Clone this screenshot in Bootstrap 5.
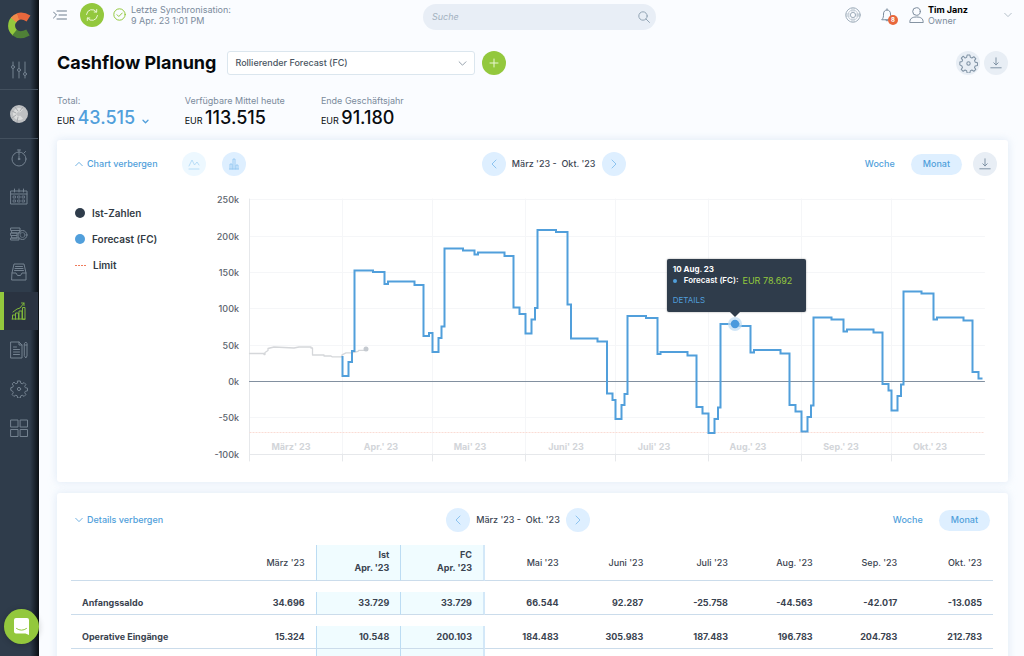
<!DOCTYPE html>
<html lang="de">
<head>
<meta charset="utf-8">
<meta name="viewport" content="width=device-width, initial-scale=1">
<title>Cashflow Planung</title>
<link href="https://cdn.jsdelivr.net/npm/bootstrap@5.3.0/dist/css/bootstrap.min.css" rel="stylesheet">
<script src="https://cdn.jsdelivr.net/npm/bootstrap@5.3.0/dist/js/bootstrap.bundle.min.js"></script>
<style>
:root{--navy:#2f3c4b;--blue:#519fdb;--sky:#deefff;--green:#93c83d;--slate:#7b8b9c;--mist:#e8eef5;--line:#cbdceb}
body{font-family:Inter,Roboto,sans-serif;font-size:9px;line-height:12px;color:#3c4653;background:#fafcff}
svg{display:block;fill:none;stroke-linejoin:round}
svg:not([stroke]){stroke:currentColor}
svg:not([stroke-linecap]){stroke-linecap:round}
.side{width:39px;padding-right:1px;background:linear-gradient(90deg,var(--navy) 0 30px,#1e2833 34px,#0a0e12 39px);color:#748290}
.side a{color:inherit}
.side-logo{height:50px}
.side-tune{height:39px}
.side-user{height:50px;border-top:1px solid #43505e;border-bottom:1px solid #43505e}
.side-nav{height:308px}
.side-nav a.on{color:#7fb63a;background:#2a3341;box-shadow:inset 4px 0 var(--green)}
.chat{left:4px;bottom:12px;width:35px;height:35px;background:var(--green);box-shadow:0 1px 6px #0003}
.top{display:grid;grid-template-columns:minmax(0,370px) minmax(0,233px) 1fr;height:32px;padding:0 12px 0 14px}
.top-l{height:29px}
.round{width:24px;height:24px;border:0;border-radius:50%;padding:0;display:flex;align-items:center;justify-content:center;flex:none}
.r-green{background:var(--green);color:#eaf6d4}
.r-sky{background:var(--sky);color:#8dc4f0}
.r-pale{background:#edf8ff;color:#a9d5f5}
.r-mist{background:var(--mist);color:#8093a5}
.muted{color:var(--slate)}
.two-line{line-height:11px}
.sync{margin:0 9px 0 13px}
.sync-text{margin-left:5px}
.search{height:26px;margin-top:4px;border-radius:13px;background:#e8eef6;padding:0 6px 0 7px}
.search input{background:none;border:0;outline:0;font-size:9px;font-style:italic;color:var(--slate)}
.search input::placeholder{color:#a3b1c0}
.plain{border:0;background:none;padding:0;color:inherit}
.menu-btn{color:#6d7d8d}
.account-btn{margin-left:36px}
.alert-dot{width:10px;height:10px;right:-5px;bottom:-3px;background:#e8673c;color:#fff;font-size:6px;line-height:10px}
.content{padding:0 16px 0 18px}
h1{font-size:18px;line-height:24px;font-weight:700;color:#06090c}
.title-row{padding-top:19px}
.pick{width:248px;height:24px;margin:0 7px 0 11px;padding:0 24px 0 7px;font-size:9px;font-weight:500;color:#4a5562;border:1px solid #dbe6ee;border-radius:3px;background-size:9px 9px;background-position:right 7px center;background-image:url("data:image/svg+xml,%3Csvg xmlns='http://www.w3.org/2000/svg' viewBox='0 0 9 9' fill='none' stroke='%2395a0ab'%3E%3Cpath d='M.8 2.5 4.5 6.2 8.2 2.5'/%3E%3C/svg%3E")}
.kpis{padding-top:20px;padding-bottom:13px;gap:36px}
.kpis strong{font-size:18px;font-weight:500}
.kpis .val{line-height:22px;height:20px;color:#090c10}
.kpis .val .sum{color:var(--blue)}
.panel{background:#fff;border-radius:3px;box-shadow:0 0 8px #c9dcec99}
.chart-panel{padding:12px 11px 10px 18px}
.detail-panel{margin-top:11px;padding:15px 15px 0 14px}
.bar{display:grid;align-items:center}
.chart-panel .bar{grid-template-columns:23fr auto 21fr}
.detail-panel .bar{grid-template-columns:15fr auto 16fr;padding-right:3px}
.range{gap:6px}
.blue{color:var(--blue);font-weight:500;text-decoration:none}
.pill{border:0;border-radius:11px;height:21px;padding:0 12px;background:var(--sky);color:var(--blue);font-weight:500}
.views{gap:16px}
.views .round{margin-left:-5px}
.span-txt{font-weight:500;white-space:pre}
.legend{width:132px;padding-top:31px;font-size:10px;font-weight:600;color:#333b44}
.legend li{height:26px;gap:7px}
.dot{width:10px;height:10px;margin-top:1px;border-radius:50%}
.dot-ist{background:var(--navy)}
.dot-fc{background:var(--blue)}
.limit{width:11px;height:1px;margin-top:6px;background:repeating-linear-gradient(90deg,#ef7c5d 0 2px,transparent 2px 3px)}
.chart{padding-right:5px;padding-top:14px}
.chart svg{width:100%;height:auto}
.chart text{stroke:none;font-size:9px}
.ylab{fill:#5c646d;text-anchor:end;font-weight:500}
.xlab{fill:#d2d5d9;text-anchor:middle;font-weight:700}
.tip{left:58.2%;top:28.2%;width:139px;height:53px;background:var(--navy);border-radius:2px;color:#fff;padding:5px 6px;line-height:11px;font-size:8px;box-shadow:0 0 2px #0006}
.tip::after{content:"";position:absolute;left:63px;top:53px;border:5px solid transparent;border-top-color:var(--navy);border-bottom:0}
.tip .dot{width:4px;height:4px;margin:0 7px 0 0;background:var(--blue)}
.tip .amount{font-size:9px;color:var(--green)}
.tip a{margin-top:9px}
.grid-tbl{width:100%;table-layout:fixed;border-collapse:separate;border-spacing:0;margin-top:13px;color:#3a4350}
.grid-tbl th,.grid-tbl td{text-align:right;padding:0 11px 0 0;border-bottom:1px solid var(--line);height:23px;font-weight:700}
.grid-tbl th:first-child{width:160px;text-align:left;padding-left:11px}
.grid-tbl thead th{height:36px;font-weight:500}
.grid-tbl thead th.now{font-weight:700;line-height:13px;padding-bottom:4px}
.grid-tbl .now{background:#f0fcff;border-left:1px solid #bcdcf3}
.grid-tbl .now+.now{border-right:2px solid #d3e8f8}
.grid-tbl .gap td{height:11px;border:0;padding:0}
</style>
</head>
<body class="d-flex vh-100 overflow-hidden">
<aside class="side vh-100 flex-shrink-0 d-flex flex-column">
  <a href="#" aria-label="Startseite" class="side-logo d-flex justify-content-center align-items-center">
    <svg width="24" height="28" viewBox="0 0 24 28" stroke-width="7" stroke-linecap="butt"><path stroke="#93c83d" d="M7.500 8C3.500 12 3.500 18 8 22"/><path stroke="#4f8037" d="M7.500 21.500Q13 26 21 21.500"/><path stroke="#f08a4b" d="M6.500 9Q8.500 6.500 11.500 5.500"/><path stroke="#e8673c" d="M11 5.500Q16 4 21.500 7.500"/></svg>
  </a>
  <a href="#" aria-label="Einstellungen" class="side-tune d-flex justify-content-center align-items-center">
    <svg width="16" height="18" viewBox="0 0 16 18"><path d="M2 1v3M2 8v9M8 1v6M8 11v6M14 1v10M14 15v2"/><circle cx="2" cy="6" r="1.500"/><circle cx="8" cy="9" r="1.500"/><circle cx="14" cy="13" r="1.500"/></svg>
  </a>
  <a href="#" aria-label="Profil" class="side-user d-flex justify-content-center align-items-center">
    <svg width="20" height="20" viewBox="0 0 20 20" stroke="none"><circle cx="10" cy="10" r="9" fill="#bfc1c3"/><path d="M14 5.500a6 6 0 1 0 0 9l-3-3a2 2 0 1 1 0-3z" fill="#dcdddd"/><path d="m3 7 4 2M6 3l3 4M3 14l4-3M8 18l1-5M14 3l-3 4" stroke="#a5a8ab"/></svg>
  </a>
  <nav class="side-nav nav d-flex flex-column flex-nowrap">
    <a href="#" aria-label="Zeit" class="flex-fill d-flex justify-content-center align-items-center"><svg width="18" height="18" viewBox="0 0 18 18"><circle cx="9" cy="10" r="7"/><path d="M9 1v5M7.500 1h3M9 7v3.500M14 4l1.500-1.500"/><circle cx="9" cy="10" r=".8"/></svg></a>
    <a href="#" aria-label="Kalender" class="flex-fill d-flex justify-content-center align-items-center"><svg width="18" height="17" viewBox="0 0 18 17"><path d="M1 3h16v13H1zM1 6h16M4.500 1v3M9 1v3M13.500 1v3"/><path d="M3.500 8h2v2h-2zM8 8h2v2H8zM12.500 8h2v2h-2zM3.500 12h2v2h-2zM8 12h2v2H8zM12.500 12h2v2h-2z" stroke-width=".8"/></svg></a>
    <a href="#" aria-label="Konten" class="flex-fill d-flex justify-content-center align-items-center"><svg width="18" height="16" viewBox="0 0 18 16"><path d="M1 2h9v2.500H1zM2 4.500h8v2.500H2zM1 7h6v2.500H1zM2 9.500h5V12H2zM1 12h8v2H1z"/><circle cx="12.500" cy="9" r="4.500"/><circle cx="12.500" cy="9" r="2.500" stroke-width=".7"/></svg></a>
    <a href="#" aria-label="Belege" class="flex-fill d-flex justify-content-center align-items-center"><svg width="16" height="18" viewBox="0 0 16 18"><path d="M1 10 3 1h10l2 9v7H1zM1 10h4l1.500 2.500h3L11 10h4M4.500 3.500h7M4 5.500h8M3.500 7.500h9"/></svg></a>
    <a href="#" aria-label="Planung" aria-current="page" class="on flex-fill d-flex justify-content-center align-items-center"><svg width="16" height="18" viewBox="0 0 16 18"><path d="M1.500 17v-4h3v4M4.500 17v-6h3v6M8 17V9h3v8M11.500 17V5.500h2.500V17zM1 17h13M2 10l4-3 3-1 4-5M10.500 1H13v2.500"/></svg></a>
    <a href="#" aria-label="Berichte" class="flex-fill d-flex justify-content-center align-items-center"><svg width="18" height="18" viewBox="0 0 18 18"><path d="M1 1h8l3 3v13H1zM9 1v3h3M3.500 6h3M3.500 8.500h6M3.500 11h6M3.500 13.500h6M14.500 2.500 15.800 1 17 2.500V15l-1.200 2-1.300-2zM14.500 4H17"/></svg></a>
    <a href="#" aria-label="Optionen" class="flex-fill d-flex justify-content-center align-items-center"><svg width="18" height="18" viewBox="0 0 18 18"><path id="cog" d="M7.700 1h2.600l.5 2.200 1.400.6 1.900-1.200 1.800 1.800-1.200 1.900.6 1.400 2.200.5v2.600l-2.200.5-.6 1.400 1.200 1.900-1.800 1.800-1.900-1.200-1.400.6-.5 2.200H7.700l-.5-2.200-1.400-.6-1.900 1.200-1.800-1.800 1.200-1.900-.6-1.400L.8 10.300V7.700l2-.5.6-1.400-1.200-1.900L4 2.100l1.800 1.700 1.400-.6z"/><circle cx="9" cy="9" r="1.600"/></svg></a>
    <a href="#" aria-label="Apps" class="flex-fill d-flex justify-content-center align-items-center"><svg width="18" height="18" viewBox="0 0 18 18"><path d="M1 1h7v7H1zM10.500 1h7v7h-7zM1 10.500h7v7H1zM10.500 10.500h7v7h-7z"/></svg></a>
  </nav>
</aside>

<main class="flex-grow-1 overflow-hidden">
  <header class="top">
    <div class="top-l d-flex align-items-center">
      <button class="plain menu-btn" aria-label="Menü"><svg width="14" height="12" viewBox="0 0 14 12"><path d="m.5 3 3 3-3 3M4 2h9.500M6 6h7.500M4 10h9.500"/></svg></button>
      <button class="round r-green sync" aria-label="Synchronisieren"><svg width="16" height="16" viewBox="0 0 16 16"><path d="M2.500 7.500A5.500 5.500 0 0 1 12.500 5M13.500 8.500A5.500 5.500 0 0 1 3.500 11M12.700 2.500V5h-2.500M3.300 13.500V11h2.500"/></svg></button>
      <svg width="13" height="13" viewBox="0 0 13 13" stroke="#93c83d"><circle cx="6.500" cy="6.500" r="5.700"/><path d="m4 6.700 1.800 1.800L9.300 5"/></svg>
      <div class="muted text-nowrap two-line sync-text">Letzte Synchronisation:<br>9 Apr. 23 1:01 PM</div>
    </div>
    <label class="search d-flex align-items-center">
      <input type="search" class="flex-grow-1" placeholder="Suche" aria-label="Suche">
      <svg width="12" height="12" viewBox="0 0 12 12" stroke="#93a5b5"><circle cx="5" cy="5" r="4.200"/><path d="m8 8 3.500 3.500"/></svg>
    </label>
    <div class="top-l d-flex align-items-center justify-content-end muted">
      <button class="plain" aria-label="Hilfe"><svg width="16" height="16" viewBox="0 0 16 16" stroke="#a2b0bd"><circle cx="8" cy="8" r="7.200"/><circle cx="8" cy="8" r="5" stroke-width=".6"/><circle cx="8" cy="8" r="2.600"/><path d="M7 .8v4.700M9 .8v4.700M7 10.500v4.700M9 10.500v4.700M.8 7h4.700M.8 9h4.700M10.500 7h4.700M10.500 9h4.700" stroke-width=".5"/></svg></button>
      <button class="plain position-relative mx-3 ps-1" aria-label="Meldungen"><svg width="12" height="14" viewBox="0 0 12 14"><path d="M1 11.500c1.500-1.500 1.500-3 1.500-5.500C2.500 3.500 4 2 6 2s3.500 1.500 3.500 4c0 2.500 0 4 1.500 5.500zM6 2V.8M4.800 11.700a1.200 1.200 0 0 0 2.400 0"/></svg><span class="alert-dot position-absolute rounded-circle fw-bold">8</span></button>
      <svg class="me-1" width="15" height="16" viewBox="0 0 15 16"><circle cx="7.500" cy="4.500" r="3.800"/><path d="M.8 15.200c0-3.500 2-5.200 6.700-5.200s6.700 1.700 6.700 5.200z"/></svg>
      <div class="text-nowrap two-line"><b class="text-black">Tim Janz</b><br>Owner</div>
      <button class="plain account-btn" aria-label="Konto"><svg width="8" height="8" viewBox="0 0 8 8" stroke="#b5c0ca"><path d="m.7 2.300 3.300 3.300 3.300-3.300"/></svg></button>
    </div>
  </header>

  <div class="content">
    <div class="title-row d-flex align-items-center">
      <h1 class="m-0">Cashflow Planung</h1>
      <select class="form-select pick" aria-label="Szenario"><option>Rollierender Forecast (FC)</option></select>
      <button class="round r-green" aria-label="Hinzufügen"><svg width="10" height="10" viewBox="0 0 10 10"><path d="M5 1v8M1 5h8"/></svg></button>
      <button class="round r-mist ms-auto me-1" aria-label="Optionen"><svg width="19" height="19" viewBox="0 0 18 18"><use href="#cog"/><circle cx="9" cy="9" r="1.600"/></svg></button>
      <button class="round r-mist" aria-label="Herunterladen"><svg width="12" height="12" viewBox="0 0 12 12"><path d="M6 .8v7M3.800 5.800 6 8l2.200-2.200M.8 10.800h10.400"/></svg></button>
    </div>

    <div class="kpis d-flex">
      <div><div class="muted">Total:</div><div class="val">EUR <strong class="sum">43.515</strong> <svg class="d-inline-block ms-1" width="7" height="7" viewBox="0 0 7 7" stroke="#519fdb" stroke-width="1.300"><path d="m1 2.200 2.500 2.500L6 2.200"/></svg></div></div>
      <div><div class="muted">Verfügbare Mittel heute</div><div class="val">EUR <strong>113.515</strong></div></div>
      <div><div class="muted">Ende Geschäftsjahr</div><div class="val">EUR <strong>91.180</strong></div></div>
    </div>

    <section class="panel chart-panel">
      <div class="bar">
        <div class="d-flex align-items-center">
          <a href="#" class="blue d-flex align-items-center"><svg class="me-1" width="8" height="8" viewBox="0 0 8 8" stroke-width=".8"><path d="M.7 5.700 4 2.400l3.300 3.300"/></svg>Chart verbergen</a>
          <button class="round r-pale ms-4" aria-label="Linien"><svg width="12" height="12" viewBox="0 0 12 12" stroke-width=".8"><path d="m1 8 3-6 2.500 5L9 4l2 3M1 11h10"/></svg></button>
          <button class="round r-sky ms-3" aria-label="Balken"><svg width="10" height="12" viewBox="0 0 10 12" stroke-width=".8"><path d="M1 11V6h2v5M4 11V1h2v10M7 11V7h2v4M.5 11h9"/></svg></button>
        </div>
        <div class="range d-flex align-items-center">
          <button class="round r-sky" aria-label="Zurück"><svg width="6" height="10" viewBox="0 0 6 10"><path d="M5 1 1 5l4 4"/></svg></button>
          <span class="span-txt">März '23 -  Okt. '23</span>
          <button class="round r-sky" aria-label="Weiter"><svg width="6" height="10" viewBox="0 0 6 10"><path d="m1 1 4 4-4 4"/></svg></button>
        </div>
        <div class="views d-flex align-items-center justify-content-end">
          <button class="plain blue">Woche</button>
          <button class="pill">Monat</button>
          <button class="round r-mist" aria-label="Herunterladen"><svg width="12" height="12" viewBox="0 0 12 12"><path d="M6 .8v7M3.800 5.800 6 8l2.200-2.200M.8 10.800h10.400"/></svg></button>
        </div>
      </div>
      <div class="d-flex">
        <ul class="legend list-unstyled m-0 flex-shrink-0 text-nowrap">
          <li class="d-flex"><span class="dot dot-ist"></span><span>Ist-Zahlen</span></li>
          <li class="d-flex"><span class="dot dot-fc"></span><span>Forecast (FC)</span></li>
          <li class="d-flex"><span class="limit"></span><span>Limit</span></li>
        </ul>
        <div class="chart flex-grow-1 position-relative">
          <svg viewBox="207 190 785 282" role="img" aria-label="Cashflow-Verlauf">
            <path stroke="#f5f6f8" d="M249.500 199.500h735M249.500 236.500h735M249.500 272.500h735M249.500 308.500h735M249.500 345.500h735M249.500 417.500h735M342.500 199v255M432.500 199v255M525.500 199v255M615.500 199v255M708.500 199v255M801.500 199v255M891.500 199v255"/>
            <path stroke="#e6e8eb" d="M249.500 199v262M249.500 454.500h735M342.500 454v7M432.500 454v7M525.500 454v7M615.500 454v7M708.500 454v7M801.500 454v7M891.500 454v7"/>
            <path stroke="#fadcd5" stroke-dasharray="2 1" stroke-linecap="butt" d="M249.500 432.500h735"/>
            <path stroke="#8290a0" d="M249.500 381.500h735"/>
            <path stroke="#d5d7da" stroke-width="1.300" d="M249.500 353.500H264v1h1v-2l3-2v-2l6-1.500 20 1 5-1h12v1h1.500v7H324v1h7l1 .8h10v-2l4-2h6l6-1.500 1-1h6.500"/>
            <circle cx="366" cy="349" r="2.500" fill="#c5cad0" stroke="none"/>
            <path stroke="#519fdb" stroke-width="2" stroke-linejoin="miter" stroke-linecap="butt" d="M342.500 356V376H348.500V362H352V351H354.500V270.500H373V272H384.500V284H388V281.500H414.500V285H423.500V336H429V333H432.500V352H438.500V338H441.500V326.500H444.500V248.500H463V250.500H474.500V254.500H478V252.500H504.500V256H513.500V307.500H519.500V314H525.500V333.500H531.500V319.500H535V308H537.500V230H556V232H567.500V304.500H571V338.500H597.500V341.500H607V393.500H612.500V400H615.500V419H621.500V405H624.500V394H627.500V316H646V318H657.500V354H660.500V352H687.500V355.500H696.500V407H702.500V413.500H708.500V433H714.500V419H718V407.500H720.500V324H739V326H750.500V352.500H754V350H780.500V353.500H789.500V405H795.500V411.500H801.500V431.500H807.500V417H811V405.500H813.500V317.500H831.500V319.500H843.500V331.500H847V329.500H873.500V332.500H882.500V384H888.500V390.500H891.500V410.500H897.500V396H901V384.500H903.500V291.500H921.500V293.500H933.500V319.500H937V317.500H963.500V320.500H972.500V372H978.500V378.500H982.500"/>
            <circle cx="735" cy="324" r="7" fill="#bcdcf3" fill-opacity=".7" stroke="none"/><circle cx="735" cy="324" r="4.200" fill="#4a9add" stroke="none"/>
            <g class="ylab"><text x="239" y="203">250k</text><text x="239" y="240">200k</text><text x="239" y="276">150k</text><text x="239" y="312">100k</text><text x="239" y="349">50k</text><text x="239" y="385">0k</text><text x="239" y="421">-50k</text><text x="239" y="458">-100k</text></g>
            <g class="xlab"><text x="291" y="450">März' 23</text><text x="381" y="450">Apr.' 23</text><text x="470" y="450">Mai' 23</text><text x="566" y="450">Juni' 23</text><text x="654" y="450">Juli' 23</text><text x="748" y="450">Aug.' 23</text><text x="841" y="450">Sep.' 23</text><text x="930" y="450">Okt.' 23</text></g>
          </svg>
          <div class="tip position-absolute">
            <b>10 Aug. 23</b>
            <div class="d-flex align-items-center text-nowrap"><span class="dot"></span><span class="fw-semibold">Forecast (FC):</span><span class="amount ms-1">EUR 78.692</span></div>
            <a href="#" class="blue d-block fw-normal">DETAILS</a>
          </div>
        </div>
      </div>
    </section>

    <section class="panel detail-panel">
      <div class="bar">
        <div><a href="#" class="blue d-inline-flex align-items-center ps-1"><svg class="me-1" width="8" height="8" viewBox="0 0 8 8" stroke-width=".8"><path d="m.7 2.300 3.300 3.300 3.300-3.300"/></svg>Details verbergen</a></div>
        <div class="range d-flex align-items-center">
          <button class="round r-sky" aria-label="Zurück"><svg width="6" height="10" viewBox="0 0 6 10"><path d="M5 1 1 5l4 4"/></svg></button>
          <span class="span-txt">März '23 -  Okt. '23</span>
          <button class="round r-sky" aria-label="Weiter"><svg width="6" height="10" viewBox="0 0 6 10"><path d="m1 1 4 4-4 4"/></svg></button>
        </div>
        <div class="views d-flex align-items-center justify-content-end">
          <button class="plain blue">Woche</button>
          <button class="pill">Monat</button>
        </div>
      </div>
      <table class="grid-tbl">
        <thead><tr><th></th><th scope="col">März '23</th><th scope="col" class="now">Ist<br>Apr. '23</th><th scope="col" class="now">FC<br>Apr. '23</th><th scope="col">Mai '23</th><th scope="col">Juni '23</th><th scope="col">Juli '23</th><th scope="col">Aug. '23</th><th scope="col">Sep. '23</th><th scope="col">Okt. '23</th></tr></thead>
        <tbody>
          <tr class="gap"><td colspan="10"></td></tr>
          <tr><th scope="row">Anfangssaldo</th><td>34.696</td><td class="now">33.729</td><td class="now">33.729</td><td>66.544</td><td>92.287</td><td>-25.758</td><td>-44.563</td><td>-42.017</td><td>-13.085</td></tr>
          <tr class="gap"><td colspan="10"></td></tr>
          <tr><th scope="row">Operative Eingänge</th><td>15.324</td><td class="now">10.548</td><td class="now">200.103</td><td>184.483</td><td>305.983</td><td>187.483</td><td>196.783</td><td>204.783</td><td>212.783</td></tr>
          <tr><th></th><td></td><td class="now"></td><td class="now"></td><td></td><td></td><td></td><td></td><td></td><td></td></tr>
        </tbody>
      </table>
    </section>
  </div>
</main>
<button class="chat position-fixed border-0 rounded-circle p-0 d-flex justify-content-center align-items-center" aria-label="Chat"><svg width="17" height="19" viewBox="0 0 17 19" stroke="none"><path fill="#fff" d="M3 1h11a2 2 0 0 1 2 2v15l-3.500-1.500H3a2 2 0 0 1-2-2V3a2 2 0 0 1 2-2z"/><path stroke="#93c83d" d="M3.500 11.500q5 3.500 10 0"/></svg></button>
</body>
</html>
